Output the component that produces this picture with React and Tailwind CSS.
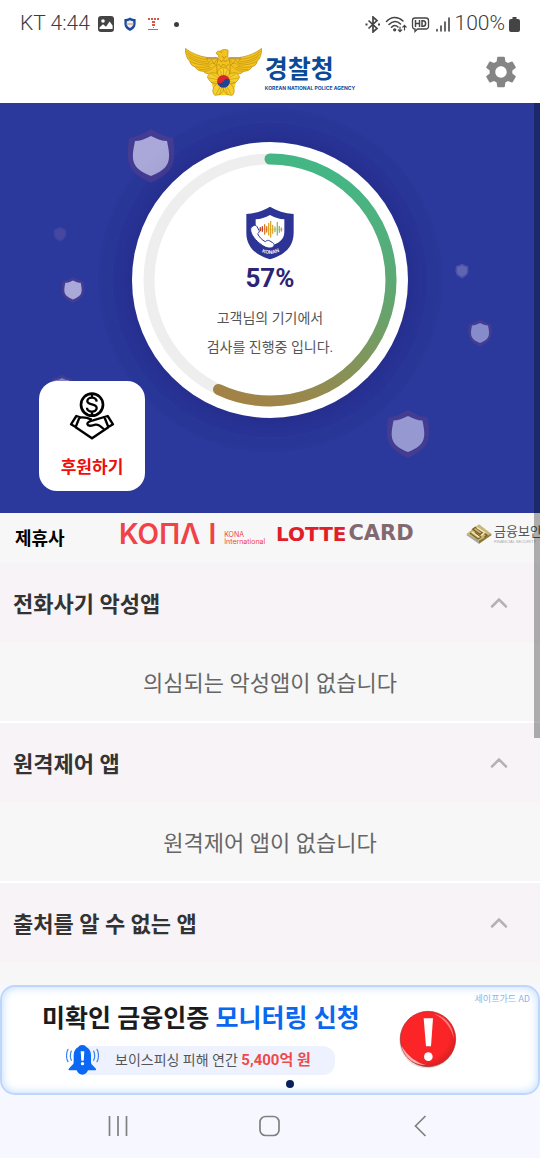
import React from "react";
import { MdSettings } from "react-icons/md";

const sections = [
  { id: "voice", title: "전화사기 악성앱", message: "의심되는 악성앱이 없습니다" },
  { id: "remote", title: "원격제어 앱", message: "원격제어 앱이 없습니다" },
  { id: "unknown", title: "출처를 알 수 없는 앱", message: "" },
];

// x, y = centre of the shield, s = scale
const shields = [
  { x: 151, y: 53, s: 1.0, fill: "#a9a8d9", halo: "#443c93" },
  { x: 408, y: 331, s: 0.9, fill: "#9699d1", halo: "#443c93" },
  { x: 73, y: 187, s: 0.48, fill: "#a9a8d9", halo: "#443c93" },
  { x: 480, y: 230, s: 0.5, fill: "#858bcb", halo: "#443c93" },
  { x: 62, y: 284, s: 0.45, fill: "#8286c4", halo: "#443c93" },
  { x: 462, y: 168, s: 0.28, fill: "#5f65b3", halo: "#4d50a6" },
  { x: 60, y: 131, s: 0.27, fill: "#4448a2", halo: "#40439f" },
];

const StatusBar = () => (
  <div className="flex h-12 items-center justify-between px-5 text-[21px] font-light text-[#3c3c3c]">
    <div className="flex items-center gap-2">
      <span>KT 4:44</span>
      <svg width="16" height="16" viewBox="0 0 16 16" aria-hidden="true">
        <rect width="16" height="16" rx="3" fill="#444" />
        <circle cx="5" cy="5" r="1.8" fill="#fff" />
        <path d="M1.5 11.5 5 8.2l3 2.6 3.6-5.2 3 4V13H1.5z" fill="#fff" />
      </svg>
      <svg width="16" height="16" viewBox="0 0 16 16" aria-hidden="true">
        <path d="M8 1.400c2 1.300 3.800 1.500 5.600 1.600v5c0 3.400-2.400 5.600-5.600 7-3.200-1.400-5.600-3.600-5.600-7V3C4.200 2.900 6 2.700 8 1.400z" fill="#1d4b9a" />
        <path d="M8 4.300c1.200.6 2.200.8 3.200.9v2.900c0 1.900-1.400 3-3.200 3.900-1.800-.9-3.200-2-3.200-3.900V5.200c1-.1 2-.3 3.200-.9z" fill="#e9eef8" />
        <path d="M4.500 8h7" stroke="#e0a888" strokeWidth="1.500" />
      </svg>
      <svg width="16" height="16" viewBox="0 0 16 16" aria-hidden="true">
        <g fill="#d9574c">
          <rect x="2" y="2" width="2" height="2" />
          <rect x="5" y="2" width="2" height="2" />
          <rect x="8" y="2" width="2" height="2" />
          <rect x="11" y="2" width="2" height="2" />
          <rect x="6" y="5" width="3" height="2" />
          <rect x="6" y="8" width="3" height="2" />
          <rect x="7" y="11" width="1" height="1" />
          <rect x="2" y="13" width="10" height="1" />
        </g>
      </svg>
      <span className="ml-1 size-[5px] rounded-full bg-[#3c3c3c]" />
    </div>
    <div className="flex items-center gap-1">
      <svg width="16" height="17" viewBox="0 0 16 17" fill="none" stroke="#444" strokeWidth="1.700" aria-hidden="true">
        <path d="m3.500 4.500 8.500 8-4 3.500V1l4 3.500-8.500 8" />
        <path d="M1.500 7.500v2M14 7.500v2" strokeWidth="2" />
      </svg>
      <svg width="22" height="17" viewBox="0 0 22 17" fill="none" stroke="#444" strokeWidth="1.500" strokeLinecap="round" aria-hidden="true">
        <path d="M1.500 5.500C6 .2 13 .2 18 5" />
        <path d="M4 8.500c3.800-4 8-4 11.500-.5" />
        <path d="M6.500 11.300c2.200-2.300 4.500-2.300 6.500-.3" />
        <circle cx="9.700" cy="13.800" r="0.900" fill="#444" />
        <path d="M15 11v4.500m-1.700-1.600 1.700 1.800 1.700-1.800M19.500 14V9.500m-1.700 1.600 1.700-1.800 1.700 1.800" strokeWidth="1.200" />
      </svg>
      <svg width="19" height="17" viewBox="0 0 19 17" fill="none" stroke="#444" aria-hidden="true">
        <path d="M4 2h11a2.500 2.500 0 0 1 2.500 2.500v6A2.500 2.500 0 0 1 15 13H6.500L4 15.500V13a2.500 2.500 0 0 1-2.500-2.500v-6A2.500 2.500 0 0 1 4 2z" strokeWidth="1.300" />
        <path d="M4.500 4v7M8.500 4v7M4.500 7.500h4M11 4.700v5.600h1c3.500 0 3.500-5.600 0-5.600z" strokeWidth="1.500" />
      </svg>
      <svg width="17" height="17" viewBox="0 0 17 17" stroke="#444" strokeWidth="1.600" strokeLinecap="round" aria-hidden="true">
        <path d="M3 13.500V15M7 10v5M11 6v9M15 2v13" />
      </svg>
      <span>100%</span>
      <svg width="11" height="15" viewBox="0 0 11 15" fill="#444" aria-hidden="true">
        <path d="M3.500 0h4v2H9a2 2 0 0 1 2 2v9a2 2 0 0 1-2 2H2a2 2 0 0 1-2-2V4a2 2 0 0 1 2-2h1.500z" />
      </svg>
    </div>
  </div>
);

const Wing = () => (
  <g>
    <path d="M1 1C20 16 45 25 66 28v4h33l3 60-24-16C66 80 58 74 55 70 42 70 34 64 30 56 20 54 15 46 15 40 7 34 1 20 1 1z" fill="#f2c31c" />
    <path d="M4 8c12 15 34 24 62 26M7 18c14 14 34 22 60 23M11 28c14 11 34 18 60 19M15 40c16 8 34 12 58 11M30 56c12 3 26 3 44-1M42 64c12 2 24 0 36-6M55 70c10 0 18-3 26-8M66 32l6 14 8-12 8 14 8-14M74 50l10-6 12 8M80 62l16-12" fill="none" stroke="#b98a14" strokeWidth="1.800" />
    <path d="M64 29.500h35" stroke="#b98618" strokeWidth="4" />
  </g>
);

const PoliceEmblem = () => (
  <svg width="77" height="48" viewBox="0 0 232 144" aria-hidden="true">
    <g stroke="#b8860f" strokeWidth="2">
      <Wing />
      <g transform="translate(232 0) scale(-1 1)">
        <Wing />
      </g>
      <path d="M94 17c0-6 5-9 12-8 6-6 20-6 24-2l-1 18 7 22v28H96V46l6-18-2-8z" fill="#f2c31c" />
    </g>
    <path d="M107 12h5M104 35l6 7 6-7 6 7 6-7M101 48l7 8 8-8 8 8 7-8M112 24l6 7 6-7" fill="none" stroke="#a97a12" strokeWidth="2" />
    <path d="M72 76h88l-16 66H90z" fill="#f6d02a" />
    <g fill="#f6d02a" stroke="#b8860f" strokeWidth="2">
      <path d="M116 100C92 84 92 62 116 58c24 4 24 26 0 42z" />
      <path d="M116 100C96 114 76 108 68 88c2-18 30-22 48 12z" />
      <path d="M116 100c20 14 40 8 48-12-2-18-30-22-48 12z" />
      <path d="M116 100c6 26-4 42-26 42-14-10-4-40 26-42z" />
      <path d="M116 100c-6 26 4 42 26 42 14-10 4-40-26-42z" />
      <path d="M116 98V62M116 98l-10-30M116 98l10-30M116 98 72 90M116 98 80 78M116 98l44-8M116 98l36-20M116 98 94 138M116 98l-12 42M116 98l22 40M116 98l12 42M116 98 78 104M116 98l38 6" fill="none" strokeWidth="1.500" />
    </g>
    <circle cx="116" cy="100" r="19" fill="#d8262c" />
    <path d="M97 100a19 19 0 0 0 38 0c0-9-13-12-19 0-6 9-19 8-19 0z" fill="#1c4596" />
  </svg>
);

const Header = () => (
  <header className="grid h-[55px] grid-cols-[1fr_auto_1fr] items-center pb-3">
    <span />
    <a href="#" className="flex items-center gap-[3px] text-[#0a4a98]" aria-label="경찰청">
      <PoliceEmblem />
      <span className="flex flex-col pt-1">
        <span className="text-[25px] leading-7 font-bold">경찰청</span>
        <span className="font-[Inter] text-[5px] leading-2 font-bold whitespace-nowrap">KOREAN NATIONAL POLICE AGENCY</span>
      </span>
    </a>
    <button type="button" aria-label="설정" className="mr-5 justify-self-end text-[#858585]">
      <MdSettings size={38} />
    </button>
  </header>
);

const Backdrop = () => (
  <svg className="absolute inset-0 size-full" viewBox="0 0 540 410" preserveAspectRatio="xMidYMid slice" aria-hidden="true">
    <circle cx="270" cy="177" r="172" fill="#29378f" fillOpacity="0.250" />
    <circle cx="270" cy="177" r="158" fill="#2a3399" fillOpacity="0.400" stroke="#2d3b9d" strokeWidth="1" />
    {shields.map((item) => (
      <g key={`${item.x}-${item.y}`} transform={`translate(${item.x} ${item.y}) scale(${item.s})`}>
        <path d="M0-27C8-22 16-19 22-18c3 23 3 33-22 45C-25 15-25 5-22-18-16-19-8-22 0-27z" fill={item.halo} />
        <path d="M0-20c6 3 11 5 16 5 4 19 4 27-16 35-20-8-20-16-16-35 5 0 10-2 16-5z" fill={item.fill} />
      </g>
    ))}
  </svg>
);

const KonanShield = () => (
  <svg width="48" height="54" viewBox="0 0 144 162" role="img" aria-label="KONAN">
    <path d="M72 2c20 12 44 20 71 22v56c0 44-30 68-71 80C31 148 1 124 1 80V24C28 22 52 14 72 2z" fill="#2c3596" />
    <path d="M72 27c14 8 28 12 43 13v38c0 22-16 34-43 43-27-9-43-21-43-43V40c15-1 29-5 43-13z" fill="#fff" />
    <path d="M38 70h78" stroke="#d6aa53" strokeWidth="1.500" />
    <g strokeWidth="4" strokeLinecap="round">
      <path d="M43 65v9M49 62v14" stroke="#bd4039" />
      <path d="M56 56v28M62 62v16" stroke="#d9782b" />
      <path d="M68 52v35M74 46v47M80 58v24" stroke="#dfa72d" />
      <path d="M87 63v14M94 49v38M100 61v18M106 66v9" stroke="#93b96a" />
    </g>
    <path d="M21 60c4-4 9-3 12 2l6 11c2 4 0 7-4 10 4 10 13 19 23 24 4-4 8-5 12-3l10 6c5 3 6 8 2 12-7 7-20 5-33-4C28 104 13 84 14 70c0-4 3-8 7-10z" fill="#fff" stroke="#2c3596" strokeWidth="3" />
    <path id="shield-caption" d="M36 132q36 24 76-2" fill="none" />
    <text fill="#fff" className="font-[Inter] text-[15px] font-semibold">
      <textPath href="#shield-caption" startOffset="50%" textAnchor="middle">KONAN</textPath>
    </text>
  </svg>
);

const ScanDial = ({ percent }) => (
  <div className="relative flex size-[276px] flex-col items-center rounded-full bg-white pt-[64px] shadow-[0_0_28px_rgba(25,20,95,0.350)]">
    <svg className="absolute inset-0 size-full" viewBox="0 0 276 276" fill="none" strokeWidth="11" aria-hidden="true">
      <defs>
        {/* drawn in the ring's own frame, which is turned -90deg below */}
        <linearGradient id="progress" gradientUnits="userSpaceOnUse" x1="258" y1="190" x2="18" y2="110">
          <stop offset="0" stopColor="#41b887" />
          <stop offset="0.500" stopColor="#68a36c" />
          <stop offset="1" stopColor="#a38246" />
        </linearGradient>
      </defs>
      <circle cx="138" cy="138" r="121" stroke="#eee" />
      <circle
        cx="138"
        cy="138"
        r="121"
        pathLength="100"
        stroke="url(#progress)"
        strokeDasharray={`${percent} 100`}
        strokeLinecap="round"
        transform="rotate(-90 138 138)"
      />
    </svg>
    <KonanShield />
    <strong className="mt-1 font-[Roboto] text-[26px] leading-7 font-bold text-[#2d2475]">{percent}%</strong>
    <p className="mt-3 text-center text-[14px] leading-[29px] text-[#555]">
      고객님의 기기에서
      <br />
      검사를 진행중 입니다.
    </p>
  </div>
);

const DonateIcon = () => (
  <svg width="46" height="48" viewBox="0 0 138 144" fill="none" stroke="#000" strokeWidth="8" aria-hidden="true">
    <circle cx="69" cy="38" r="33" />
    <path d="M69 5v12M69 59v12M83 29c-1-16-27-16-28-2 0 14 28 6 28 21 0 15-29 14-29-1" strokeWidth="7" />
    <path d="M22 72 6 97l14 8 12-30zM116 72l16 25-14 8-12-30z" strokeLinejoin="round" strokeWidth="7" />
    <path d="M32 77c14-3 25 1 36 6M106 75 72 85c-9 2-17 6-17 11 2 8 12 5 24 2 13-3 20 10 28 16M20 106l49 33 49-33" strokeWidth="7" />
  </svg>
);

const Hero = () => (
  <section className="relative flex h-[410px] shrink-0 justify-center overflow-hidden bg-[#2a399b] pt-[39px]">
    <Backdrop />
    <ScanDial percent={57} />
    <button type="button" className="absolute bottom-[22px] left-[39px] flex h-[110px] w-[106px] flex-col items-center justify-between rounded-[18px] bg-white pt-[11px] pb-[10px]">
      <DonateIcon />
      <span className="text-[17px] leading-7 font-bold text-[#ee0d0d]">후원하기</span>
    </button>
  </section>
);

const Partners = () => (
  <section className="flex h-[50px] shrink-0 items-start overflow-hidden bg-[#f7f7f8] pl-[15px] whitespace-nowrap">
    <h2 className="w-[104px] shrink-0 pt-3 text-[18px] leading-7 font-bold text-black">제휴사</h2>
    <div className="flex h-[42px] shrink-0 items-center">
      <div className="flex w-[157px] shrink-0 items-center gap-2 text-[#f04248]">
        <span className="font-[Inter] text-[28px] font-semibold">KOΠΛ</span>
        <span className="font-[Inter] text-[28px] font-semibold">I</span>
        <span className="pt-2 font-[Inter] text-[7px] leading-[7px]">
          KONA
          <br />
          International
        </span>
      </div>
      <div className="flex w-[190px] shrink-0 items-center gap-[2px] font-[DejaVu_Sans] text-[20px] font-bold">
        <span className="text-[#df2029]">LOTTE</span>
        <span className="text-[21px] text-[#82696f]">CARD</span>
      </div>
      <div className="flex shrink-0 items-center gap-[2px]">
        <svg width="26" height="20" viewBox="0 0 78 60" aria-hidden="true">
          <path d="M39 1 2 29l37 30 37-30z" fill="#c9b67a" />
          <path d="M2 29v5l37 25V50z" fill="#a9a69b" />
          <path d="M76 29v5L39 59V50z" fill="#8c7434" />
          <path d="m28 10 22 15-8 6-22-15zM12 27l24 18 8-6-17-13M42 20l21 14-8 6" fill="none" stroke="#7d6120" strokeWidth="4" />
          <path d="m32 10 24 16-10 8M18 24l22 16" fill="none" stroke="#f3e9c6" strokeWidth="4" />
        </svg>
        <span className="flex flex-col">
          <span className="text-[13px] leading-4 text-[#555]">금융보안</span>
          <span className="font-[Liberation_Sans] text-[4px] leading-1 text-[#aaa]">FINANCIAL SECURITY</span>
        </span>
      </div>
    </div>
  </section>
);

const ResultSection = ({ title, message }) => (
  <section className="shrink-0 border-b-2 border-white bg-[#f7f7f7]">
    <h3>
      <button type="button" aria-expanded="true" className="flex h-[80px] w-full items-center justify-between bg-[#f7f3f7] pr-8 pl-[13px] text-left text-[22px] font-bold text-[#333]">
        <span className="pt-[2px]">{title}</span>
        <svg width="18" height="12" viewBox="0 0 18 12" fill="none" stroke="#b5b2b5" strokeWidth="2.500" strokeLinecap="round" aria-hidden="true">
          <path d="m2 9.500 7-7 7 7" />
        </svg>
      </button>
    </h3>
    <p className="flex h-[78px] items-center justify-center pt-[2px] text-[22px] text-[#666]">{message}</p>
  </section>
);

const AdBanner = () => (
  <aside className="bg-[#f7f7ff]">
    <a href="#" className="relative flex h-[110px] rounded-[15px] border-2 border-[#bdd7fb] bg-white pl-10 shadow-[inset_0_0_10px_#bcd8ff]">
      <div className="flex w-[320px] shrink-0 flex-col items-start pt-[14px]">
        <p className="text-[25px] leading-9 font-bold whitespace-nowrap text-[#1c1c1c]">
          미확인 금융인증 <span className="text-[#0a68f0]">모니터링 신청</span>
        </p>
        <div className="mt-2 ml-6 flex items-center">
          <svg width="33" height="30" viewBox="0 0 99 90" className="z-10" aria-hidden="true">
            <path d="M49 0c8 0 9 3 11 5 10 5 15 14 15 26v20c0 8 5 9 12 17 6 6 4 8-3 8H66c-3 8-9 13-17 13s-14-5-17-13H14c-7 0-9-2-3-8 7-8 12-9 12-17V31C23 19 28 10 38 5c2-2 3-5 11-5z" fill="#0a68f5" />
            <path d="M44 19h11l-2 28h-7z" fill="#fff" />
            <circle cx="49.500" cy="56" r="5" fill="#fff" />
            <path d="M6 13C0 24 0 40 6 50M16 18c-4 9-4 19 0 28M93 13c6 11 6 27 0 37M83 18c4 9 4 19 0 28" fill="none" stroke="#3582ee" strokeWidth="3.500" strokeLinecap="round" />
          </svg>
          <p className="-ml-4 rounded-r-[12px] bg-[#eef2ff] pr-6 pl-8 text-[14px] leading-[29px] whitespace-nowrap text-[#555]">
            보이스피싱 피해 연간 <strong className="text-[15px] font-bold text-[#ef4a4a]">5,400억 원</strong>
          </p>
        </div>
      </div>
      <svg width="60" height="60" viewBox="0 0 180 180" className="mt-[22px] ml-9 shrink-0" aria-hidden="true">
        <defs>
          <radialGradient id="gloss" cx="0.450" cy="0.450" r="0.600">
            <stop offset="0.700" stopColor="#fb2527" />
            <stop offset="1" stopColor="#d51d20" />
          </radialGradient>
        </defs>
        <circle cx="88" cy="94" r="84" fill="#c9c4c4" fillOpacity="0.600" />
        <circle cx="90" cy="90" r="83" fill="url(#gloss)" stroke="#a9282c" strokeWidth="2" />
        <path d="M108 14c34 8 58 36 60 76-8-32-26-58-60-76z" fill="#ff7a7a" />
        <path d="M10 110c10 36 38 58 74 58-30-8-54-26-74-58z" fill="#ffb0b0" />
        <path d="M77 28h28l-6 84H84z" fill="#fff" />
        <circle cx="91" cy="143" r="13" fill="#fff" />
      </svg>
      <span className="absolute top-[6px] right-2 text-[9px] text-[#8fb3e8]">세이프가드 AD</span>
      <span className="absolute bottom-[5px] left-[53%] size-2 rounded-full bg-[#08205c]" />
    </a>
  </aside>
);

const NavBar = () => (
  <nav className="grid h-[63px] shrink-0 grid-cols-[1fr_66px_1fr] items-center bg-[#f7f7ff] px-[100px] pb-[2px] text-[#808080]">
    <button type="button" aria-label="최근 앱" className="justify-self-start">
      <svg width="36" height="24" viewBox="0 0 36 24" stroke="currentColor" strokeWidth="1.700">
        <path d="M9.500 2v20M18 2v20M26.500 2v20" />
      </svg>
    </button>
    <button type="button" aria-label="홈" className="justify-self-center">
      <svg width="24" height="24" viewBox="0 0 24 24" fill="none" stroke="currentColor" strokeWidth="1.700">
        <rect x="2" y="2.500" width="19" height="19" rx="5.500" />
      </svg>
    </button>
    <button type="button" aria-label="뒤로" className="justify-self-end">
      <svg width="36" height="24" viewBox="0 0 36 24" fill="none" stroke="currentColor" strokeWidth="1.700">
        <path d="M21.500 2 11.500 12l10 10" />
      </svg>
    </button>
  </nav>
);

const App = () => {
  return (
    <div className="flex h-screen flex-col bg-white font-[Roboto,'Noto_Sans_CJK_KR',sans-serif]">
      <StatusBar />
      <Header />
      <div className="relative flex min-h-0 flex-1 flex-col">
        <main className="flex min-h-0 flex-1 flex-col overflow-hidden">
          <Hero />
          <Partners />
          {sections.map((section) => (
            <ResultSection key={section.id} title={section.title} message={section.message} />
          ))}
        </main>
        {/* scroll position indicator */}
        <span className="absolute top-0 right-0 h-[72%] w-[6px] bg-black/30" />
      </div>
      <AdBanner />
      <NavBar />
    </div>
  );
};

export default App;
